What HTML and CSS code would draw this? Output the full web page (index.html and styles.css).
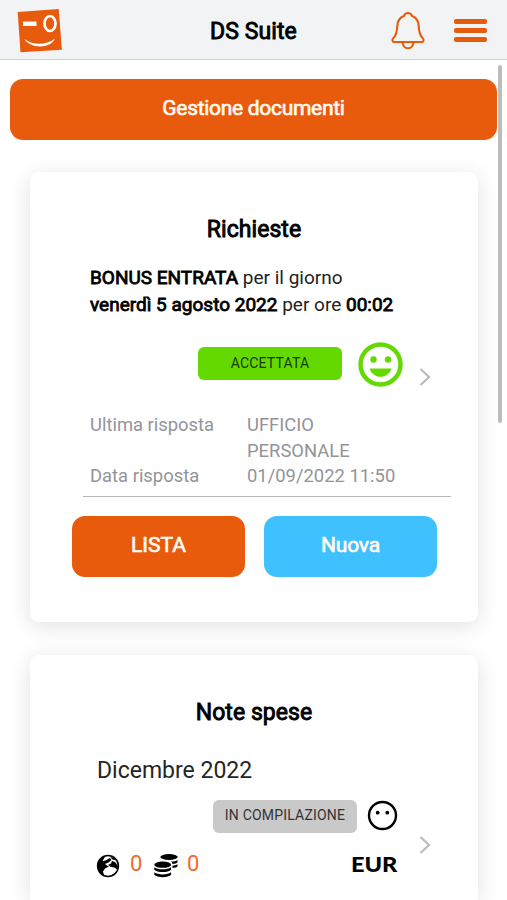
FILE: index.html
```
<!DOCTYPE html>
<html lang="it">
<head>
<meta charset="utf-8">
<title>DS Suite</title>
<link rel="stylesheet" href="styles.css">
</head>
<body>
<header class="topbar">
  <svg class="logo" viewBox="0 0 46 46">
    <path fill="#e85a0c" d="M.7 4 41.700 1 44.900 41.700 3.500 44.200z"/>
    <path fill="#fff" d="M6 13.500h13.500v4.500H6z"/>
    <ellipse cx="33" cy="15.500" rx="5.500" ry="7.500" fill="none" stroke="#fff" stroke-width="2.700"/>
    <path fill="#fff" d="M7.300 31c9 6.500 21 6.500 30.700-.2-4.500 10.200-24.500 10.200-30.700.2z"/>
  </svg>
  <h1 class="brand">DS Suite</h1>
  <svg class="bell" viewBox="0 0 34 40" fill="none" stroke="#e85a0c" stroke-width="2.100" stroke-linejoin="round" stroke-linecap="round">
    <path d="M17 2c-2 0-3.300 1-3.800 2.800C8.500 6.600 6.500 10 6.300 15c-.2 6-.8 9.500-4.300 12.500-.8.7-.8 3.500 1 3.500h28c1.800 0 1.800-2.800 1-3.500-3.500-3-4.100-6.500-4.300-12.500-.2-5-2.200-8.400-6.900-10.200C20.300 3 19 2 17 2z"/>
    <path d="M11.500 31c.4 4 2.600 6.300 5.500 6.300s5.100-2.300 5.500-6.300"/>
  </svg>
  <div class="menu"><i></i><i></i><i></i></div>
</header>
<div class="scrollbar"></div>
<main class="page">
  <a class="btn wide">Gestione documenti</a>

  <section class="card requests">
    <h2 class="title">Richieste</h2>
    <p class="summary"><b>BONUS ENTRATA</b> per il giorno<br><b>venerdì 5 agosto 2022</b> per ore <b>00:02</b></p>
    <div class="status">
      <span class="badge ok">ACCETTATA</span>
      <svg class="smile" viewBox="0 0 45 45">
        <circle cx="22.500" cy="22.500" r="20" fill="none" stroke="#64d900" stroke-width="4.400"/>
        <circle cx="15.500" cy="17.500" r="3.200" fill="#64d900"/><circle cx="30" cy="17.500" r="3.200" fill="#64d900"/>
        <path fill="#64d900" d="M11.500 26.500h22c-1.600 5-6 8.300-11 8.300s-9.400-3.300-11-8.300z"/>
      </svg>
      <svg class="chevron" viewBox="0 0 12 20"><path d="M1.500 2l8.500 8-8.500 8"/></svg>
    </div>
    <dl class="details">
      <dt>Ultima risposta</dt><dd>UFFICIO<br>PERSONALE</dd>
      <dt>Data risposta</dt><dd>01/09/2022 11:50</dd>
    </dl>
    <div class="actions">
      <a class="btn">LISTA</a>
      <a class="btn blue">Nuova</a>
    </div>
  </section>

  <section class="card expenses">
    <h2 class="title">Note spese</h2>
    <p class="month">Dicembre 2022</p>
    <div class="progress">
      <span class="badge draft">IN COMPILAZIONE</span>
      <svg class="blank" viewBox="0 0 31 31"><circle cx="15.500" cy="15.500" r="13.500" fill="none" stroke="#000" stroke-width="2.400"/><circle cx="10.700" cy="12.700" r="1.900"/><circle cx="20.300" cy="12.700" r="1.900"/></svg>
    </div>
    <div class="totals">
      <svg class="globe" viewBox="0 0 24 24">
        <circle cx="12" cy="12" r="10.400" fill="#fff" stroke="#000" stroke-width="1.500"/>
        <path d="M1.800 13C1.500 7 5 3 9.500 2L8 4.500 6.500 7l3-.5L14 4l1.500 2-3 2.500L9 10l2 1.500 2 1-4 2-2 3 1 4C4 20 2 17 1.800 13z"/>
        <path d="M12 11l3-1.500 1-2.500 3 1 3 4-.5 4-3-2.500-3.500-.5z"/>
        <path d="M14 2.500l4 1.800 1.500 2-3-.8z"/>
      </svg>
      <span class="count">0</span>
      <svg class="coins" viewBox="0 0 24 24">
        <ellipse cx="15" cy="3" rx="8.700" ry="2.900"/>
        <path d="M17 7.500c3 0 5-.6 6.500-1.600v2.300c-.8 1-2.500 1.500-5 1.700-.2-.9-.7-1.700-1.500-2.400zM18.500 11.500c2 0 3.700-.4 5-1.200v2c-.8 1-2.500 1.500-5 1.600z"/>
        <ellipse cx="8.700" cy="10.700" rx="8.400" ry="3.100"/>
        <path d="M.3 13.200c3.500 2.800 13.300 2.800 16.800 0v2.500c-2.500 3.200-14.300 3.200-16.800 0zM.3 18.300c3.500 2.800 13.300 2.800 16.800 0v2.500c-2.500 3.200-14.300 3.200-16.800 0z"/>
      </svg>
      <span class="count">0</span>
      <span class="currency">EUR</span>
      <svg class="chevron" viewBox="0 0 12 20"><path d="M1.500 2l8.500 8-8.500 8"/></svg>
    </div>
  </section>
</main>
</body>
</html>
```
FILE: styles.css
```
* { box-sizing: border-box; }
html, body { height: 100%; overflow: hidden; }
body { margin: 0; background: #fff; color: #111; font-family: Roboto, "Liberation Sans", sans-serif; }
h1, h2, p, dl, dd { margin: 0; }
svg { display: block; flex: none; }

.topbar { display: flex; height: 60px; background: #f1f3f5; border-bottom: 1.5px solid #d0d3d6; padding-left: 17px; }
.logo { width: 46px; height: 46px; margin-top: 8px; }
.brand { width: 147px; margin-left: 147px; font-size: 23px; line-height: 63px; color: #000; font-weight: 400; letter-spacing: .1px; -webkit-text-stroke: .9px; white-space: nowrap; }
.bell { width: 34px; height: 40px; margin: 11px 0 0 34px; }
.menu { display: flex; flex-direction: column; gap: 4.500px; margin: 19px 0 0 29px; }
.menu i { width: 33px; height: 4.500px; border-radius: 2px; background: #e85a0c; }
.scrollbar { position: absolute; right: 5px; top: 65px; width: 4px; height: 358px; border-radius: 2px; background: #bcbcbc; }

.page { display: flex; flex-direction: column; height: 840px; overflow: hidden; padding: 19px 10px 0; }
.btn { display: flex; justify-content: center; align-items: center; flex: 1; height: 60.500px; padding-bottom: 3px; border-radius: 13px; background: #e85a0c; color: #fff8f0; font-size: 21px; -webkit-text-stroke: .7px; white-space: nowrap; }
.btn.wide { flex: none; letter-spacing: -.3px; }
.btn.blue { background: #3fc1ff; letter-spacing: -.2px; }

.card { flex: none; margin: 0 19px 0 20px; width: 448px; border-radius: 9px; background: #fff; box-shadow: 0 4px 22px rgba(0,0,0,.12); }
.requests { height: 450px; margin-top: 32.500px; padding-top: 43px; }
.expenses { height: 245px; margin-top: 33px; padding-top: 42.500px; border-radius: 9px 9px 0 0; }
.title { height: 29px; line-height: 30px; text-align: center; font-size: 23px; font-weight: 400; color: #000; letter-spacing: .05px; -webkit-text-stroke: .9px; }
.summary { margin: 20px 0 0 60px; font-size: 19px; line-height: 27px; white-space: nowrap; color: #222; }
.summary b { font-weight: 400; color: #000; -webkit-text-stroke: .8px; }

.status { display: flex; margin: 24px 0 0 168px; height: 45px; }
.badge { display: flex; align-items: center; justify-content: center; width: 144px; height: 33px; padding-bottom: 2px; border-radius: 6px; font-size: 14px; letter-spacing: .2px; white-space: nowrap; }
.badge.ok { background: #64d900; color: #173a00; margin-top: 5px; }
.badge.draft { background: #c9c9c9; color: #333; }
.smile { width: 45px; height: 45px; margin: -.500px 0 0 16px; }
.chevron { width: 12px; height: 20px; fill: none; stroke: #bbb; stroke-width: 2.200; }
.status .chevron { margin: 25px 0 0 16px; }

.details { display: grid; grid-template-columns: 157px 1fr; width: 368px; height: 85px; margin: 25px 0 0 53px; padding: 0 0 0 7px; border-bottom: 1.300px solid #b8b8b8; font-size: 18.400px; line-height: 25.700px; color: #929499; align-content: start; }

.actions { display: flex; gap: 19px; margin: 19px 41px 0 42px; }

.month { margin: 29px 0 0 67px; height: 30px; line-height: 30px; font-size: 23px; color: #252525; white-space: nowrap; }
.progress { display: flex; margin: 14px 0 0 183px; height: 33px; }
.blank { width: 31px; height: 31px; margin: .500px 0 0 9.500px; }
.totals { display: flex; align-items: center; margin: 15px 0 0 66px; height: 34px; }
.globe { width: 24px; height: 24px; margin-top: 2px; }
.coins { width: 24px; height: 24px; margin-top: 2px; }
.count { width: 12px; margin: -1px 12px 0 10px; font-size: 22px; line-height: 30px; color: #f06a2c; }
.coins + .count { margin-left: 9px; margin-right: 13px; }
.currency { width: 47px; margin: -1px 0 0 139px; font: 900 20.500px/30px Lato, sans-serif; color: #000; transform: scaleX(1.150); transform-origin: left; }
.totals .chevron { margin: -40px 0 0 21px; }
```
